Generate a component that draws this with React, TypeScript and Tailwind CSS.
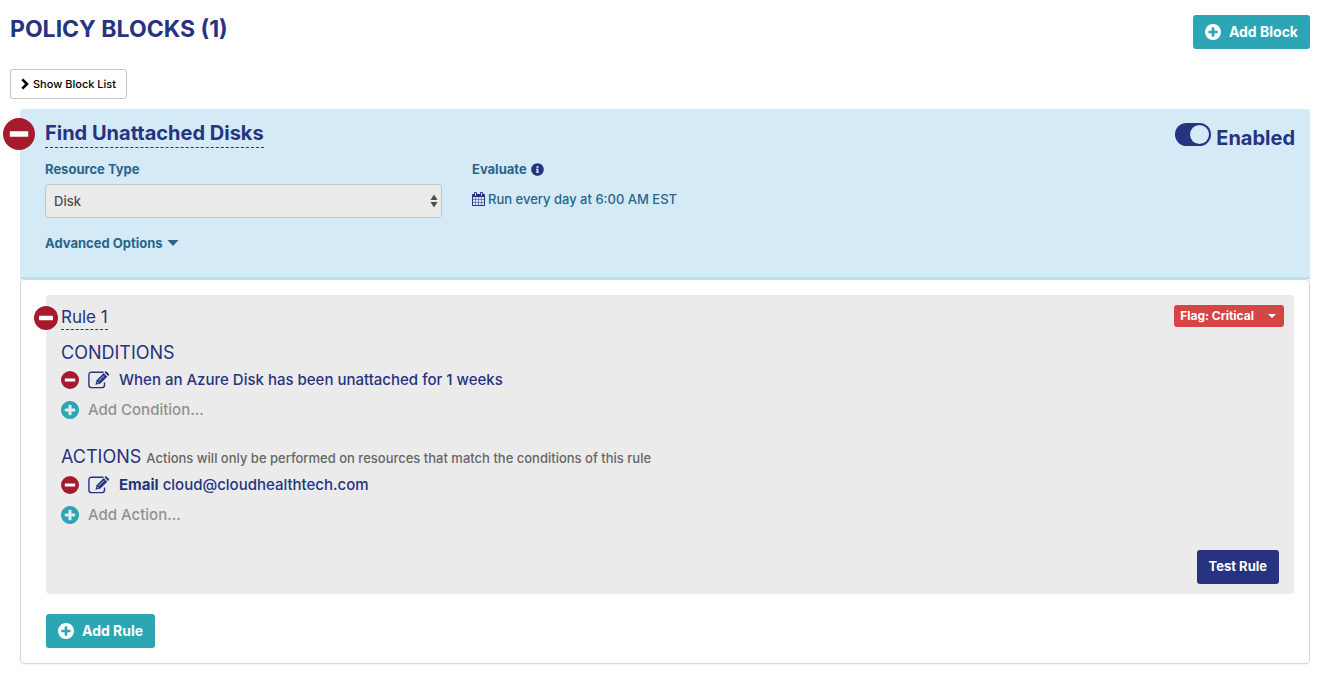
import { FaInfoCircle } from 'react-icons/fa';

interface IconProps {
  className?: string;
}

function MinusIcon({ className }: IconProps) {
  return (
    <svg viewBox="0 0 18 18" className={className} aria-hidden="true">
      <circle cx="9" cy="9" r="9" fill="#a51b2d" />
      <rect x="3.8" y="7.4" width="10.4" height="3.2" rx="0.4" fill="#fff" />
    </svg>
  );
}

function PlusIcon({ className }: IconProps) {
  return (
    <svg viewBox="128 128 1536 1536" fill="currentColor" className={className} aria-hidden="true">
      <path d="M1344 960v-128q0-26-19-45t-45-19h-256v-256q0-26-19-45t-45-19h-128q-26 0-45 19t-19 45v256h-256q-26 0-45 19t-19 45v128q0 26 19 45t45 19h256v256q0 26 19 45t45 19h128q26 0 45-19t19-45v-256h256q26 0 45-19t19-45zm320-64q0 209-103 385.5t-279.5 279.5-385.5 103-385.5-103-279.5-279.5-103-385.5 103-385.5 279.5-279.5 385.5-103 385.5 103 279.5 279.5 103 385.5z" />
    </svg>
  );
}

function CalendarIcon({ className }: IconProps) {
  return (
    <svg viewBox="64 0 1664 1792" fill="currentColor" className={className} aria-hidden="true">
      <path d="M192 1664h288v-288h-288v288zm352 0h320v-288h-320v288zm-352-352h288v-320h-288v320zm352 0h320v-320h-320v320zm-352-384h288v-288h-288v288zm736 736h320v-288h-320v288zm-384-736h320v-288h-320v288zm768 736h288v-288h-288v288zm-384-352h320v-320h-320v320zm-352-864v-288q0-13-9.5-22.5t-22.5-9.5h-64q-13 0-22.5 9.5t-9.5 22.5v288q0 13 9.5 22.5t22.5 9.5h64q13 0 22.5-9.5t9.5-22.5zm736 864h288v-320h-288v320zm-384-384h320v-288h-320v288zm384 0h288v-288h-288v288zm32-480v-288q0-13-9.5-22.5t-22.5-9.5h-64q-13 0-22.5 9.5t-9.5 22.5v288q0 13 9.5 22.5t22.5 9.5h64q13 0 22.5-9.5t9.5-22.5zm384-64v1280q0 52-38 90t-90 38h-1408q-52 0-90-38t-38-90v-1280q0-52 38-90t90-38h128v-96q0-66 47-113t113-47h64q66 0 113 47t47 113v96h384v-96q0-66 47-113t113-47h64q66 0 113 47t47 113v96h128q52 0 90 38t38 90z" />
    </svg>
  );
}

function EditIcon({ className }: IconProps) {
  return (
    <svg viewBox="0 0 22 18" className={className} aria-hidden="true">
      <path d="M15.5 1.2H3.6Q0.9 1.2 0.9 3.9V13.9Q0.9 16.6 3.6 16.6H13.8Q16.5 16.6 16.5 13.9V11.4" fill="none" stroke="currentColor" strokeWidth="1.4" />
      <path d="M7.4 13.8L8.6 9.2L15.7 2.1L19.3 5.7L12.2 12.8Z" fill="currentColor" />
      <path d="M16.5 1.3L17.3 0.5Q17.9 0 18.5 0.5L21 3Q21.5 3.6 21 4.1L20.1 4.9Z" fill="currentColor" />
      <path d="M10.6 10L16 4.6M9 10.9L10.5 12.4" fill="none" stroke="#ebebeb" strokeWidth="0.8" />
    </svg>
  );
}

function ChevronIcon({ className }: IconProps) {
  return (
    <svg viewBox="0 0 8 12" className={className} aria-hidden="true">
      <path d="M1.3 1.3L6 6L1.3 10.7" fill="none" stroke="currentColor" strokeWidth="2.6" />
    </svg>
  );
}

interface RuleSectionProps {
  item: React.ReactNode;
  addLabel: string;
}

function RuleSection({ item, addLabel }: RuleSectionProps) {
  return (
    <ul className="text-[15px] leading-[30px] font-medium">
      <li className="flex items-center">
        <button aria-label="Remove"><MinusIcon className="h-[18px] w-[18px]" /></button>
        <button aria-label="Edit" className="ml-[9px] text-[#263381]"><EditIcon className="h-[18px] w-[22px]" /></button>
        <span className="ml-[9px]">{item}</span>
      </li>
      <li>
        <button className="flex items-center gap-[9px] text-[#919191]">
          <PlusIcon className="h-[18px] w-[18px] text-[#2ca5b5]" />
          {addLabel}
        </button>
      </li>
    </ul>
  );
}

export default function App() {
  return (
    <main className="bg-white pt-3 pr-[14px] pb-[14px] pl-[10px] font-['Inter',sans-serif] text-[#263381]">
      <header className="flex items-start justify-between">
        <h1 className="text-[23px] leading-[34px] font-bold">POLICY BLOCKS (1)</h1>
        <button className="mt-[3px] flex h-[34px] items-center gap-2 rounded-[3px] bg-[#2ca5b5] px-3 text-sm font-bold text-white">
          <PlusIcon className="h-4 w-4" />
          Add Block
        </button>
      </header>

      <button className="mt-5 flex h-[30px] items-center gap-1 rounded-[3px] border border-[#c4c4c4] px-[10px] text-[11px] font-medium text-black">
        <ChevronIcon className="h-3 w-2" />
        Show Block List
      </button>

      <article className="mt-[10px] ml-[10px]">
        <section className="relative rounded-t-[3px] border-b-2 border-[#b5e2ee] bg-[#d4eaf7] pr-[15px] pb-6 pl-[25px]">
          <button aria-label="Remove block" className="absolute top-[9px] -left-[17px]">
            <MinusIcon className="h-8 w-8" />
          </button>
          <div className="flex items-start justify-between">
            <h2 className="mt-[11px] border-b border-dashed border-[#263381] text-xl leading-[27px] font-bold">
              Find Unattached Disks
            </h2>
            <label className="mt-[14px] flex items-start gap-[5px] text-xl leading-[30px] font-bold">
              <input type="checkbox" role="switch" defaultChecked className="peer sr-only" />
              <span className="flex h-[23px] w-9 justify-end rounded-full bg-[#263381] p-[2px]">
                <span className="h-[19px] w-[19px] rounded-full bg-[#d4eaf7]"></span>
              </span>
              Enabled
            </label>
          </div>

          <div className="mt-[6px] flex gap-[30px] text-[13px] leading-5 font-medium text-[#2b658a]">
            <div className="w-[397px]">
              <label htmlFor="resource-type" className="block font-bold">Resource Type</label>
              <div className="relative mt-[5px]">
                <select
                  id="resource-type"
                  className="h-[34px] w-full appearance-none rounded-[4px] border border-[#c4c4c4] bg-[#ebebeb] px-2 text-[#4d4d4d]"
                >
                  <option>Disk</option>
                </select>
                <svg viewBox="0 0 8 14" className="pointer-events-none absolute top-[10px] right-1 h-[14px] w-2 fill-[#4d4d4d]" aria-hidden="true">
                  <path d="M4 0.5L7.5 6H0.5ZM4 13.5L7.5 8H0.5Z" />
                </svg>
              </div>
            </div>
            <div>
              <p className="flex items-center gap-1 font-bold">
                Evaluate <FaInfoCircle className="h-[13px] w-[13px] text-[#263381]" />
              </p>
              <p className="mt-[10px] flex items-center gap-[3px]">
                <CalendarIcon className="h-[14px] w-[13px] text-[#263381]" />
                Run every day at 6:00 AM EST
              </p>
            </div>
          </div>

          <button className="mt-[15px] flex items-center gap-1 text-[13px] leading-5 font-bold text-[#2b658a]">
            Advanced Options
            <svg viewBox="0 0 12 6" className="h-[6px] w-3 fill-current" aria-hidden="true">
              <path d="M0.5 0H11.5L6 6Z" />
            </svg>
          </button>
        </section>

        <section className="rounded-[4px] border border-[#d6d6d6] px-[15px] pt-[15px] pb-[15px] pl-[25px] shadow-xs">
          <div className="relative rounded-[4px] bg-[#ebebeb] px-[15px] pt-[10px] pb-[10px]">
            <button aria-label="Remove rule" className="absolute top-[11px] -left-3">
              <MinusIcon className="h-6 w-6" />
            </button>
            <div className="flex items-start justify-between">
              <h3 className="border-b border-dashed border-[#263381] text-[17px] leading-6">Rule 1</h3>
              <button className="-mr-[5px] flex h-[22px] items-center gap-[14px] rounded-[3px] bg-[#d64545] pr-2 pl-[6px] text-xs font-bold text-white">
                Flag: Critical
                <svg viewBox="0 0 8 4" className="h-1 w-2 fill-current" aria-hidden="true">
                  <path d="M0 0H8L4 4Z" />
                </svg>
              </button>
            </div>

            <h4 className="mt-[11px] text-lg leading-6">CONDITIONS</h4>
            <RuleSection item="When an Azure Disk has been unattached for 1 weeks" addLabel="Add Condition..." />

            <h4 className="mt-5 text-lg leading-6">
              ACTIONS <small className="text-[13px] font-medium text-[#666]">Actions will only be performed on resources that match the conditions of this rule</small>
            </h4>
            <RuleSection item={<><strong className="font-bold">Email</strong> cloud@cloudhealthtech.com</>} addLabel="Add Action..." />

            <div className="mt-5 flex justify-end">
              <button className="h-[34px] rounded-[3px] bg-[#263381] px-3 text-[13px] font-bold text-white">Test Rule</button>
            </div>
          </div>

          <button className="mt-5 flex h-[34px] items-center gap-2 rounded-[3px] bg-[#2ca5b5] px-3 text-sm font-bold text-white">
            <PlusIcon className="h-4 w-4" />
            Add Rule
          </button>
        </section>
      </article>
    </main>
  );
}
